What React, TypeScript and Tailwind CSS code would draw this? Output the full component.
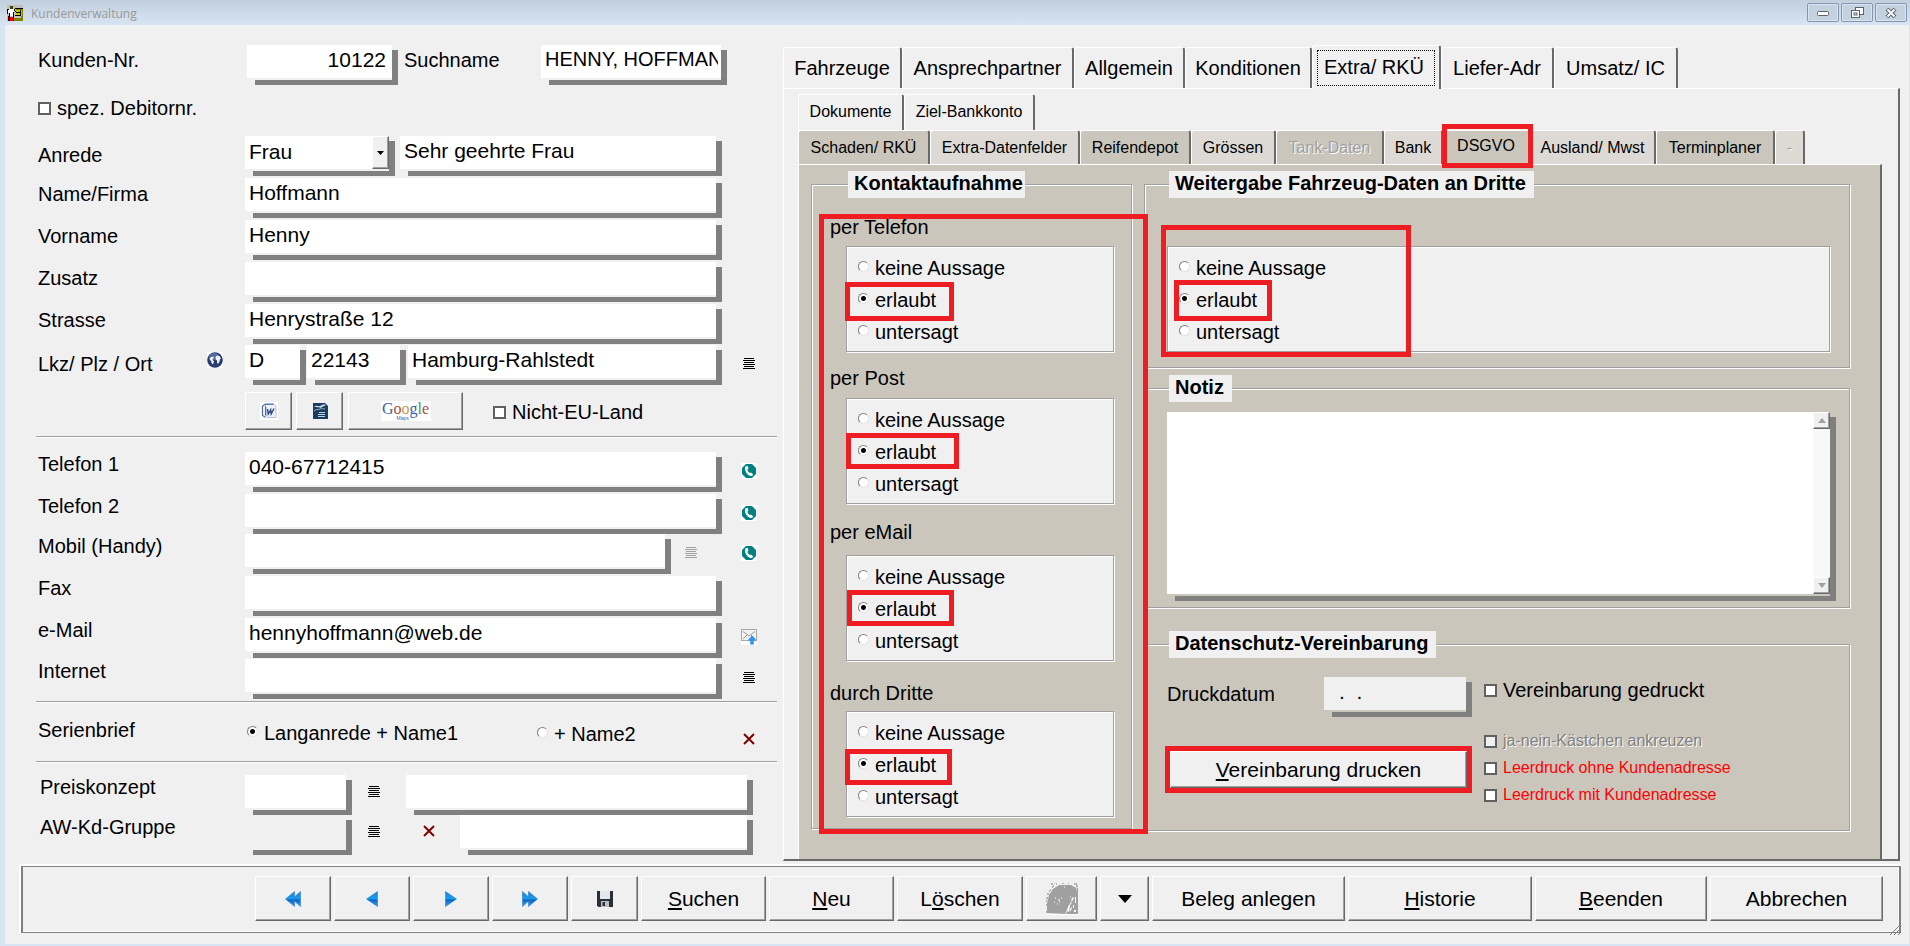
import type { ReactNode } from "react";
import clsx from "clsx";

/* ---------- Icons ---------- */

const AppIcon = () => (
    <svg width="16" height="16" viewBox="0 0 16 16" shapeRendering="crispEdges">
        <rect width="16" height="16" fill="#c0c0c0" />
        <path d="M9 3h7v13H6v-3h8V5H9z" fill="#808000" />
        <path d="M9 5h6v6H9z" fill="#c8c800" />
        <path d="M8 3h8v1H8zM9 7h5v1H9zM8 10h6v1H8zM13 5h1v5h-1z" fill="#000" />
        <path d="M3 1h3v3H3z" fill="#404000" />
        <path d="M1 4h6v7H2V8H1z" fill="#fff" />
        <path d="M0 4h2v1H0zM0 5h1v4H0zM7 4h1v2H7zM2 8h1v4H2zM6 7h1v5H6zM8 6h1v1H8z" fill="#000" />
        <path d="M3 12h3v4H3z" fill="#f00" />
        <path d="M1 11h2v5H1zM6 12h1v4H6z" fill="#400" />
    </svg>
);

const ListIcon = ({ muted = false }: { muted?: boolean }) => (
    <svg width="12" height="11" viewBox="0 0 12 11" shapeRendering="crispEdges" fill={muted ? "#a0a0a0" : "#000"}>
        <path d="M1 0h10v1H1zM0 2h12v1H0zM1 4h10v1H1zM0 6h12v1H0zM1 8h10v1H1zM0 10h12v1H0z" />
    </svg>
);

const CrossIcon = () => (
    <svg width="12" height="12" viewBox="0 0 12 12" fill="none" stroke="#800000" strokeWidth="2">
        <path d="M1 1l10 10M11 1L1 11" />
    </svg>
);

const PhoneIcon = () => (
    <svg width="16" height="16" viewBox="0 0 16 16">
        <rect width="16" height="16" fill="#fff" />
        <path d="M5 1h6l4 4v6l-4 4H5l-4-4V5z" fill="#008080" />
        <path d="M4.500 3.500L6.500 2.800 7.600 5.600 6.400 6.600c.2 1.400 1.100 2.700 2.300 3.500l1.300-.6 2.200 1.900-1.200 1.600c-1.900.4-4-.8-5.500-3S3.500 5 4.500 3.500z" fill="#fff" />
    </svg>
);

const MailIcon = () => (
    <svg width="16" height="16" viewBox="0 0 16 16">
        <rect width="16" height="16" fill="#fff" />
        <rect x=".5" y=".5" width="15" height="11" fill="#f2f2f2" stroke="#a8a8a8" />
        <path d="M2 2.500l6 4.500 6-4.500M2 10l4-4M14 10l-4-4" fill="none" stroke="#9a9a9a" />
        <path d="M11 6.500l4.500 5h-2.700V15.500H9.200V11.500H6.500z" fill="#2f95ee" />
    </svg>
);

const GlobeIcon = () => (
    <svg width="16" height="16" viewBox="0 0 16 16">
        <rect width="16" height="16" fill="#fff" />
        <circle cx="8" cy="8" r="7.800" fill="#2b3d70" />
        <ellipse cx="7" cy="4.500" rx="5" ry="3.500" fill="#7f93c2" opacity=".55" />
        <path d="M2.500 6.500L4 5l2.500-.3.500 1.300-1.500 1 .5 1.500 1 1-1 3-1.500-1.500-.2-2L3 8z" fill="#eef1f8" />
        <path d="M8.500 5L10 3.500l2.500.5 1.500 2.500-1 .8-.5 2.200-1.500 2.500-1-1.500V8.500L8.800 7.500z" fill="#eef1f8" />
    </svg>
);

const WordIcon = () => (
    <svg width="18" height="18" viewBox="0 0 18 18">
        <rect width="18" height="18" fill="#fff" />
        <path d="M5.500 2.500h9l1.500 1.500v11.500H7z" fill="#eef2fa" stroke="#b5c0d8" />
        <path d="M2.500 4l3-1.800h8M2.500 4v9.500l3 1.800M5.500 4.500v9" fill="none" stroke="#4a68a4" strokeWidth="1.200" />
        <path d="M7.500 7l.8 5 2.400-4.200.5 4.200L14 6.500" fill="none" stroke="#2c4684" strokeWidth="1.400" />
    </svg>
);

const WriterIcon = () => (
    <svg width="16" height="16" viewBox="0 0 16 16">
        <path d="M1 0h12l3 3v13H1z" fill="#1c3c5c" />
        <path d="M2 4c3-3 4 0 6-1s3-2 6-1c-2 2-4 1-5 3-2-1-4-1-7-1z" fill="#c5d9ea" />
        <path d="M2 8c2-2 4-1 6-2 2-1 3 0 5 0" fill="none" stroke="#8fb2d0" />
        <path d="M7 9.500h6M6 11.500h7M6 13.500h7" stroke="#b9d3ea" />
    </svg>
);

const Arrow = ({ double = false, left = false }: { double?: boolean; left?: boolean }) => (
    <svg width="16" height="16" viewBox="0 0 16 16" className={clsx(left && "-scale-x-100")}>
        <defs>
            <linearGradient id="arrowFill" x1="0" y1="0" x2="0" y2="1">
                <stop offset="0" stopColor="#1f7fd6" />
                <stop offset=".5" stopColor="#12a0f2" />
                <stop offset=".55" stopColor="#0a62c0" />
                <stop offset="1" stopColor="#39a2ee" />
            </linearGradient>
        </defs>
        <g fill="url(#arrowFill)" stroke="#2d7cc4" strokeWidth=".6">
            {double ? (
                <>
                    <path d="M.5.5L9 8 .5 15.500z" />
                    <path d="M6.500.5L15.500 8l-9 7.500z" />
                </>
            ) : (
                <path d="M2.500.5L13.500 8l-11 7.500z" />
            )}
        </g>
    </svg>
);

const FloppyIcon = () => (
    <svg width="16" height="16" viewBox="0 0 16 16">
        <path d="M0 0h16v16H1.500L0 14.500z" fill="#2d2f38" />
        <rect x="3" y="0" width="10" height="8" fill="#e2e8ec" />
        <rect x="4" y="10" width="8" height="6" fill="#b9bcc2" />
        <rect x="5.500" y="11" width="2.500" height="4" fill="#2d2f38" />
    </svg>
);

const PortraitIcon = () => (
    <svg width="32" height="32" viewBox="0 0 32 32">
        <path d="M1 30V20l2-8 4-6 6-4h12l3 2 4 1v26H20l2-5 3-5 2-4-3 3-4 9-1 2z" fill="#a0a0a0" />
        <path d="M5 1h2M8 0h1M6 4h1M10 1h1M3 8h1M1 11h2M0 15h2M4 7h1M7 3h1M28 1h3M30 3h2M22 0h1M0 18h1M0 22h1M16 0h2M0 29h1" stroke="#a0a0a0" strokeWidth="1.400" />
        <path d="M21 28l2-6 1 1-1 6zM25 17l2-3 1 1-2 3zM29 14h1v6h-1zM27 22h1v3h-1zM24 26l2-2v1l-2 4zM28 27h2v2h-2z" fill="#fff" />
        <path d="M9 15h1M12 17h2M8 19h1M11 21h1M15 15h1M13 19h1M18 4h1M24 14h1M30 6h1" stroke="#fff" />
        <path d="M1 31.500h31" stroke="#fff" />
    </svg>
);

const DownIcon = () => (
    <svg width="14" height="8" viewBox="0 0 14 8"><path d="M0 0h14L7 8z" fill="#000" /></svg>
);

/* ---------- Controls ---------- */

const bevel = "bg-[#f0f0f0] border-t border-l border-white border-r-[#696969] border-b-[#696969] border-r border-b shadow-[inset_-1px_-1px_0_#a0a0a0]";
const groove = "border border-[#a0a0a0] shadow-[1px_1px_0_#fff,inset_1px_1px_0_#fff]";
const redFrame = "absolute z-10 pointer-events-none border-[5px] border-[#ee1c23]";

// Box with the hard offset shadow all text fields share
const Shadow = ({ className, children }: { className?: string; children: ReactNode }) => (
    <div className={clsx("flex h-10 pr-1.5 pb-[5px] bg-no-repeat bg-[linear-gradient(#808080,#808080)] bg-[position:8px_5px]", className)}>
        {children}
    </div>
);

interface FieldProps {
    id?: string;
    label?: string;
    value?: string;
    className?: string;
    inputClass?: string;
}

const Field = ({ id, label, value = "", className, inputClass = "bg-white border-[#f0f0f0] px-1 text-[21px]" }: FieldProps) => (
    <Shadow className={className}>
        <input
            id={id}
            aria-label={label}
            defaultValue={value}
            className={clsx("w-full min-w-0 h-[35px] pb-1 border-b-2 outline-none", inputClass)}
        />
    </Shadow>
);

const Check = ({ text, className, disabled }: { text: string; className?: string; disabled?: boolean }) => (
    <label className={clsx("flex items-center gap-1.5 h-6 leading-6 whitespace-nowrap", className)}>
        <input type="checkbox" disabled={disabled} className="appearance-none size-[13px] shrink-0 border-2 border-[#606060] bg-white disabled:bg-[#f0f0f0]" />
        {text}
    </label>
);

const Radio = ({ name, text, checked }: { name: string; text: string; checked?: boolean }) => (
    <label className="flex items-center gap-1.5 leading-6 whitespace-nowrap">
        <input
            type="radio"
            name={name}
            defaultChecked={checked}
            className="appearance-none size-[11px] mb-1 shrink-0 rounded-full bg-white border border-[#808080] border-r-[#e3e3e3] border-b-[#e3e3e3] checked:bg-[radial-gradient(circle,#000_0_2px,#fff_3px)]"
        />
        {text}
    </label>
);

interface RowProps {
    label: string;
    id: string;
    height?: string;
    labelClass?: string;
    side?: ReactNode;
    extra?: ReactNode;
    children: ReactNode;
}

const Row = ({ label, id, height = "h-[42px]", labelClass = "", side, extra, children }: RowProps) => (
    <div className={clsx("flex pl-0.5", height)}>
        <div className={clsx("flex w-[207px] shrink-0 leading-6", labelClass)}>
            <label htmlFor={id} className="w-[169px]">{label}</label>
            {extra}
        </div>
        <div className="flex flex-1 min-w-0">{children}</div>
        <div className="flex justify-center items-center w-[55px] h-[37px] pr-0.5 shrink-0">{side}</div>
    </div>
);

const Rule = ({ className }: { className?: string }) => (
    <hr className={clsx("h-0.5 border-0 border-t border-[#a0a0a0] bg-white", className)} />
);

const IconButton = ({ label, children }: { label: string; children: ReactNode }) => (
    <button type="button" aria-label={label} className="flex">{children}</button>
);

/* ---------- Left side: customer form ---------- */

const CustomerForm = () => (
    <form className="flex flex-col pl-[31px] pr-1.5 pt-5">
        <div className="flex h-10 pl-0.5 pr-[50px] leading-6">
            <label htmlFor="nr" className="w-[209px] pt-[3px]">Kunden-Nr.</label>
            <Field id="nr" value="10122" className="w-[151px]" inputClass="bg-white border-[#f0f0f0] text-right pl-1 pr-1.5 text-[21px]" />
            <label htmlFor="suchname" className="w-[143px] pl-1.5 pt-[3px]">Suchname</label>
            <Field id="suchname" value="HENNY, HOFFMANN" className="flex-1" inputClass="bg-white border-[#f0f0f0] pl-1 pr-[3px] text-[20px]" />
        </div>
        <Check text="spez. Debitornr." className="mt-[11px] pl-0.5" />

        <div className="mt-4">
            <Row label="Anrede" id="anrede" labelClass="pt-[7px]">
                <Shadow className="relative w-[150px] shrink-0">
                    <select id="anrede" className="appearance-none w-full h-[35px] pb-1 pl-1 bg-white border-b-2 border-[#f0f0f0] text-[21px] outline-none">
                        <option>Frau</option>
                        <option>Herr</option>
                        <option>Firma</option>
                    </select>
                    <span className={clsx("absolute right-1.5 top-0 flex justify-center items-center w-[17px] h-[33px] pointer-events-none", bevel)}>
                        <svg width="7" height="4" viewBox="0 0 7 4"><path d="M0 0h7L3.500 4z" /></svg>
                    </span>
                </Shadow>
                <Field label="Briefanrede" value="Sehr geehrte Frau" className="flex-1 ml-[5px]" />
            </Row>
            <Row label="Name/Firma" id="name" labelClass="pt-1">
                <Field id="name" value="Hoffmann" className="flex-1" />
            </Row>
            <Row label="Vorname" id="vorname" labelClass="pt-1">
                <Field id="vorname" value="Henny" className="flex-1" />
            </Row>
            <Row label="Zusatz" id="zusatz" labelClass="pt-1">
                <Field id="zusatz" className="flex-1" />
            </Row>
            <Row label="Strasse" id="strasse" labelClass="pt-1" height="h-[41px]">
                <Field id="strasse" value="Henrystraße 12" className="flex-1" />
            </Row>
            <Row
                label="Lkz/ Plz / Ort"
                id="lkz"
                labelClass="pt-[7px]"
                height="h-[47px]"
                extra={<IconButton label="Karte"><GlobeIcon /></IconButton>}
                side={<IconButton label="Orte"><ListIcon /></IconButton>}
            >
                <Field id="lkz" value="D" className="w-[61px]" />
                <Field label="Plz" value="22143" className="w-[99px] ml-px" />
                <Field label="Ort" value="Hamburg-Rahlstedt" className="flex-1 ml-0.5" />
            </Row>
            <div className="flex items-center h-[38px] pl-[209px]">
                <button type="button" aria-label="Word" className={clsx("flex justify-center items-center w-[47px] h-full", bevel)}><WordIcon /></button>
                <button type="button" aria-label="Writer" className={clsx("flex justify-center items-center w-[47px] h-full ml-1", bevel)}><WriterIcon /></button>
                <button type="button" className={clsx("flex justify-center items-center w-[115px] h-full ml-[5px]", bevel)}>
                    <span className="relative w-[50px] h-5 bg-white font-['Liberation_Serif',serif] text-[16px] leading-4">
                        <span className="text-[#3a5fa8]">G</span>
                        <span className="text-[#b04a44]">o</span>
                        <span className="text-[#c0a040]">o</span>
                        <span className="text-[#3a5fa8]">g</span>
                        <span className="text-[#4a9a50]">l</span>
                        <span className="text-[#b04a44]">e</span>
                        <span className="absolute left-4 bottom-0 font-['Liberation_Sans',sans-serif] text-[5px] leading-[6px] text-[#3a5fa8]">Maps</span>
                    </span>
                </button>
                <Check text="Nicht-EU-Land" className="ml-[30px] pt-0.5" />
            </div>
        </div>
        <Rule className="mt-1.5" />

        <div className="mt-3.5">
            <Row label="Telefon 1" id="tel1" side={<IconButton label="Telefon 1 anrufen"><PhoneIcon /></IconButton>}>
                <Field id="tel1" value="040-67712415" className="flex-1" />
            </Row>
            <Row label="Telefon 2" id="tel2" height="h-10" side={<IconButton label="Telefon 2 anrufen"><PhoneIcon /></IconButton>}>
                <Field id="tel2" className="flex-1" />
            </Row>
            <Row label="Mobil (Handy)" id="mobil" side={<IconButton label="Mobil anrufen"><PhoneIcon /></IconButton>}>
                <Field id="mobil" className="flex-1" />
                <div className="flex items-center w-[51px] h-9 pl-3.5"><IconButton label="Mobilnummern"><ListIcon muted /></IconButton></div>
            </Row>
            <Row label="Fax" id="fax"><Field id="fax" className="flex-1" /></Row>
            <Row label="e-Mail" id="email" height="h-[41px]" side={<IconButton label="e-Mail senden"><MailIcon /></IconButton>}>
                <Field id="email" value="hennyhoffmann@web.de" className="flex-1" />
            </Row>
            <Row label="Internet" id="internet" side={<IconButton label="Internet"><ListIcon /></IconButton>}>
                <Field id="internet" className="flex-1" />
            </Row>
        </div>
        <Rule />

        <div role="radiogroup" aria-label="Serienbrief" className="flex h-[29px] mt-[15px] pl-0.5 leading-6">
            <span className="w-[209px]">Serienbrief</span>
            <div className="flex flex-1 pt-[3px]">
                <div className="w-[290px]"><Radio name="serienbrief" text="Langanrede + Name1" checked /></div>
                <Radio name="serienbrief" text="+ Name2" />
            </div>
            <div className="flex items-end w-[34px] pb-0.5"><IconButton label="Serienbrief löschen"><CrossIcon /></IconButton></div>
        </div>
        <Rule className="mt-3.5" />

        <div className="mt-3 pl-1 pr-6 leading-6">
            <div className="flex h-10">
                <label htmlFor="preis" className="w-[205px]">Preiskonzept</label>
                <Field id="preis" className="w-[107px]" />
                <div className="flex items-center w-[54px] h-8 pl-4"><IconButton label="Preiskonzepte"><ListIcon /></IconButton></div>
                <Field label="Preiskonzept Text" className="flex-1" />
            </div>
            <div className="flex h-10">
                <label htmlFor="gruppe" className="w-[205px]">AW-Kd-Gruppe</label>
                <Field id="gruppe" className="w-[107px]" inputClass="bg-[#f0f0f0] border-[#f0f0f0] px-1 text-[21px]" />
                <div className="flex items-center gap-[43px] w-[108px] h-8 pl-4">
                    <IconButton label="Gruppen"><ListIcon /></IconButton>
                    <IconButton label="Gruppe löschen"><CrossIcon /></IconButton>
                </div>
                <Field label="AW-Kd-Gruppe Text" className="flex-1" />
            </div>
        </div>
    </form>
);

/* ---------- Right side: tabs ---------- */

const tabEdge = "border-t border-l border-white border-r-2 border-r-[#696969] rounded-t-[3px] whitespace-nowrap";

const mainTabs = [
    { text: "Fahrzeuge", width: "w-[119px]" },
    { text: "Ansprechpartner", width: "w-[172px]" },
    { text: "Allgemein", width: "w-[111px]" },
    { text: "Konditionen", width: "w-[127px]" },
    { text: "Extra/ RKÜ", width: "w-[129px]", active: true },
    { text: "Liefer-Adr", width: "w-[113px]" },
    { text: "Umsatz/ IC", width: "w-[124px]" },
];

const subTabs = [
    { text: "Schaden/ RKÜ", width: "w-[132px]", dark: true },
    { text: "Extra-Datenfelder", width: "w-[150px]" },
    { text: "Reifendepot", width: "w-[111px]", dark: true },
    { text: "Grössen", width: "w-[85px]" },
    { text: "Tank-Daten", width: "w-[108px]", dark: true, disabled: true },
    { text: "Bank", width: "w-[59px]" },
    { text: "DSGVO", width: "w-[87px]", dark: true, active: true },
    { text: "Ausland/ Mwst", width: "w-[126px]" },
    { text: "Terminplaner", width: "w-[119px]", dark: true },
    { text: "-", width: "w-[30px]", disabled: true },
];

const legendClass = "h-[27px] pl-1.5 bg-[#f0f0f0] text-[20px] font-bold leading-[25px] whitespace-nowrap";

const Legend = ({ children }: { children: ReactNode }) => (
    <legend className={clsx("ml-0.5 pr-2", legendClass)}>{children}</legend>
);

const Consent = ({ name, label, frame }: { name: string; label: string; frame: string }) => (
    <div role="radiogroup" aria-label={label} className={clsx("relative flex flex-col gap-2 h-[106px] pl-[11px] pt-[9px] bg-[#f0f0f0]", groove)}>
        <Radio name={name} text="keine Aussage" />
        <Radio name={name} text="erlaubt" checked />
        <Radio name={name} text="untersagt" />
        <span className={clsx(redFrame, frame)} />
    </div>
);

const contacts = [
    { name: "telefon", label: "per Telefon", space: "pt-[17px]", gap: "mb-[7px]", frame: "-left-0.5 top-[35px] w-[109px] h-[39px]" },
    { name: "post", label: "per Post", space: "pt-3.5", gap: "mb-2", frame: "-left-px top-[34px] w-[113px] h-9" },
    { name: "mail", label: "per eMail", space: "pt-4", gap: "mb-[11px]", frame: "left-0 top-[34px] w-[107px] h-9" },
    { name: "dritte", label: "durch Dritte", space: "pt-5", gap: "mb-1.5", frame: "-left-0.5 top-[37px] w-[107px] h-9" },
];

const ContactGroup = () => (
    <div className="relative w-[321px] shrink-0">
        <fieldset className={clsx("min-w-0 pl-[18px] pr-[17px] pb-[11px]", groove)}>
            <legend className={clsx("ml-[18px] pr-0.5", legendClass)}>Kontaktaufnahme</legend>
            {contacts.map((c) => (
                <div key={c.name} className={c.space}>
                    <p className={clsx("leading-6", c.gap)}>{c.label}</p>
                    <div className="ml-4"><Consent name={c.name} label={c.label} frame={c.frame} /></div>
                </div>
            ))}
        </fieldset>
        <span className={clsx(redFrame, "left-2 top-[43px] w-[329px] h-[620px]")} />
    </div>
);

const ScrollButton = ({ up = false }: { up?: boolean }) => (
    <button type="button" aria-label={up ? "Nach oben" : "Nach unten"} className={clsx("flex justify-center items-center size-[17px]", bevel)}>
        <svg width="8" height="5" viewBox="0 0 8 5" fill="#a0a0a0"><path d={up ? "M4 0l4 5H0z" : "M0 0h8L4 5z"} /></svg>
    </button>
);

const PrivacyPanel = () => (
    <div className="flex gap-3 pl-3 pr-[30px] pt-1.5 pb-7 border-t border-l border-white border-r-2 border-r-[#696969] bg-[#cbc6bb]">
        <ContactGroup />
        <div className="flex flex-col flex-1 min-w-0">
            <div className="relative">
                <fieldset className={clsx("min-w-0 pl-[22px] pr-[19px] pb-[15px]", groove)}>
                    <Legend>Weitergabe Fahrzeug-Daten an Dritte</Legend>
                    <div className="mt-12">
                        <Consent name="weitergabe" label="Weitergabe Fahrzeug-Daten an Dritte" frame="left-1.5 top-[33px] w-[98px] h-[41px]" />
                    </div>
                </fieldset>
                <span className={clsx(redFrame, "left-[17px] top-[54px] w-[250px] h-[132px]")} />
            </div>

            <fieldset className={clsx("min-w-0 mt-[7px] pl-[22px] pr-[13px] pb-1.5", groove)}>
                <Legend>Notiz</Legend>
                <div className="mt-2.5 pr-1.5 pb-[5px] bg-no-repeat bg-[linear-gradient(#808080,#808080)] bg-[position:8px_5px]">
                    <div className="flex h-[184px] border-b-2 border-[#cbc6bb]">
                        <textarea aria-label="Notiz" className="flex-1 p-1 bg-white resize-none outline-none" />
                        <div className="flex flex-col justify-between w-[17px] bg-[#f8f8f8]">
                            <ScrollButton up />
                            <ScrollButton />
                        </div>
                    </div>
                </div>
            </fieldset>

            <fieldset className={clsx("min-w-0 mt-[23px] pl-[22px]", groove)}>
                <Legend>Datenschutz-Vereinbarung</Legend>
                <div className="flex gap-3 h-[172px] pt-[19px]">
                    <div className="w-[305px] leading-6">
                        <div className="flex justify-between">
                            <label htmlFor="druck" className="pt-[5px]">Druckdatum</label>
                            <Field id="druck" value=".  ." className="w-[148px]" inputClass="bg-[#f0f0f0] border-[#cbc6bb] pl-[15px] text-[21px]" />
                        </div>
                        <div className="-ml-0.5 mt-[29px] border-[5px] border-[#ee1c23]">
                            <button type="button" className={clsx("w-full h-[37px] text-[21px]", bevel)}>
                                <u>V</u>ereinbarung drucken
                            </button>
                        </div>
                    </div>
                    <div className="pt-px">
                        <Check text="Vereinbarung gedruckt" />
                        <div className="flex flex-col gap-[3px] mt-[27px] text-base">
                            <Check text="ja-nein-Kästchen ankreuzen" disabled className="text-[#808080] [text-shadow:1px_1px_0_#fff]" />
                            <Check text="Leerdruck ohne Kundenadresse" className="text-[#ff0000]" />
                            <Check text="Leerdruck mit Kundenadresse" className="text-[#ff0000]" />
                        </div>
                    </div>
                </div>
            </fieldset>
        </div>
    </div>
);

const Details = () => (
    <section className="flex flex-col pt-5 pr-[9px]">
        <div className="flex items-end h-[43px]" role="tablist">
            {mainTabs.map((tab) => (
                <button
                    key={tab.text}
                    type="button"
                    role="tab"
                    aria-selected={!!tab.active}
                    className={clsx("shrink-0", tabEdge, tab.width, tab.active ? "h-[44px] -mb-px p-1 bg-[#f0f0f0] relative" : "h-[41px]")}
                >
                    {tab.active ? <span className="block h-9 pr-1 leading-8 border border-dotted border-black">{tab.text}</span> : tab.text}
                </button>
            ))}
        </div>
        <div className="pl-[14px] pt-[5px] pr-4 border-t border-l border-white border-r-2 border-r-[#696969] border-b-2 border-b-[#696969]">
            <div className="flex h-9 text-base" role="tablist">
                <button type="button" role="tab" className={clsx("w-[106px] pb-0.5", tabEdge)}>Dokumente</button>
                <button type="button" role="tab" className={clsx("w-[131px] pb-0.5", tabEdge)}>Ziel-Bankkonto</button>
            </div>
            <div className="flex h-[34px] text-base" role="tablist">
                {subTabs.map((tab) => (
                    <button
                        key={tab.text}
                        type="button"
                        role="tab"
                        aria-selected={!!tab.active}
                        disabled={tab.disabled}
                        className={clsx(
                            "shrink-0",
                            tabEdge,
                            tab.width,
                            tab.dark ? "bg-[#cbc6bb]" : "bg-[#dddad5]",
                            tab.disabled && "text-[#a0a0a0] [text-shadow:1px_1px_0_#fff]",
                            tab.active && "relative pb-1"
                        )}
                    >
                        {tab.text}
                        {tab.active && <span className={clsx(redFrame, "-left-0.5 -top-[7px] w-[91px] h-[44px]")} />}
                    </button>
                ))}
            </div>
            <PrivacyPanel />
        </div>
    </section>
);

/* ---------- Bottom bar ---------- */

const actions = [
    { key: "first", label: "Erster", width: "w-[76px]", content: <Arrow double left /> },
    { key: "prev", label: "Zurück", width: "w-[76px]", content: <Arrow left /> },
    { key: "next", label: "Weiter", width: "w-[76px]", content: <Arrow /> },
    { key: "last", label: "Letzter", width: "w-[76px]", content: <Arrow double /> },
    { key: "save", label: "Speichern", width: "w-[67px]", content: <FloppyIcon /> },
    { key: "search", width: "grow basis-[125px]", content: <span><u>S</u>uchen</span> },
    { key: "new", width: "grow basis-[125px]", content: <span><u>N</u>eu</span> },
    { key: "delete", width: "grow basis-[126px]", content: <span>L<u>ö</u>schen</span> },
    { key: "image", label: "Bild", width: "w-[71px]", content: <PortraitIcon /> },
    { key: "more", label: "Mehr", width: "w-[49px]", content: <DownIcon /> },
    { key: "receipt", width: "grow basis-[193px]", content: <span>Beleg anlegen</span> },
    { key: "history", width: "grow basis-[184px]", content: <span><u>H</u>istorie</span> },
    { key: "close", width: "grow basis-[172px]", content: <span><u>B</u>eenden</span> },
    { key: "cancel", width: "grow basis-[173px]", content: <span>Abbrechen</span> },
];

const ActionBar = () => (
    <footer className="relative mt-[3px] ml-3.5 mr-2 mb-2.5 border-t-2 border-l-2 border-white">
        <div className="flex gap-[3px] h-[67px] pl-[232px] pr-4 pt-[9px] pb-[11px] border border-l-2 border-r-2 border-[#808080] shadow-[inset_-1px_-1px_0_#fff]">
            {actions.map((a) => (
                <button key={a.key} type="button" aria-label={a.label} className={clsx("flex justify-center items-center text-[21px]", bevel, a.width)}>
                    {a.content}
                </button>
            ))}
        </div>
        <svg width="12" height="12" viewBox="0 0 12 12" className="absolute right-0 -bottom-0.5" stroke="#808080" fill="none">
            <path d="M1 12L12 1M5 12l7-7M9 12l3-3" />
        </svg>
    </footer>
);

const windowButton = "flex justify-center items-center w-8 h-[19px] rounded-[2px] border border-[#8494b4] shadow-[inset_0_0_0_1px_#d9e5f1] bg-[#c4d2e0]";

const TitleBar = () => (
    <header className="flex items-center h-[25px] pl-[7px] pr-[3px] bg-[linear-gradient(#c2d0dd,#d7e4f2)]">
        <AppIcon />
        <h1 className="flex-1 pl-2 pt-0.5 font-['Open_Sans','Noto_Sans',sans-serif] text-[12px] text-[#999999]">Kundenverwaltung</h1>
        <div className="flex gap-0.5">
            <button type="button" aria-label="Minimieren" className={windowButton}>
                <svg width="12" height="6" viewBox="0 0 12 6"><rect x=".5" y="1.500" width="11" height="4" rx="1" fill="#fff" stroke="#5a6270" /></svg>
            </button>
            <button type="button" aria-label="Wiederherstellen" className={windowButton}>
                <svg width="13" height="12" viewBox="0 0 13 12" fill="#fff" stroke="#5a6270">
                    <rect x="4.500" y=".5" width="8" height="7" />
                    <rect x=".5" y="3.500" width="8" height="7" />
                    <rect x="3" y="6" width="3" height="2" />
                </svg>
            </button>
            <button type="button" aria-label="Schließen" className={windowButton}>
                <svg width="12" height="10" viewBox="0 0 12 10">
                    <path d="M2 1l8 8M10 1L2 9" stroke="#5a6270" strokeWidth="4" />
                    <path d="M2.500 1.500l7 7M9.500 1.500l-7 7" stroke="#fff" strokeWidth="2" />
                </svg>
            </button>
        </div>
    </header>
);

export default function App() {
    return (
        <div className="min-h-screen pb-0.5 bg-[#d7e4f2] font-['Liberation_Sans',Arial,sans-serif] text-[20px] text-black">
            <TitleBar />
            <main className="ml-[5px] mr-px pb-px bg-[#f0f0f0]">
                <div className="grid grid-cols-[778fr_1126fr]">
                    <CustomerForm />
                    <Details />
                </div>
                <ActionBar />
            </main>
        </div>
    );
}
